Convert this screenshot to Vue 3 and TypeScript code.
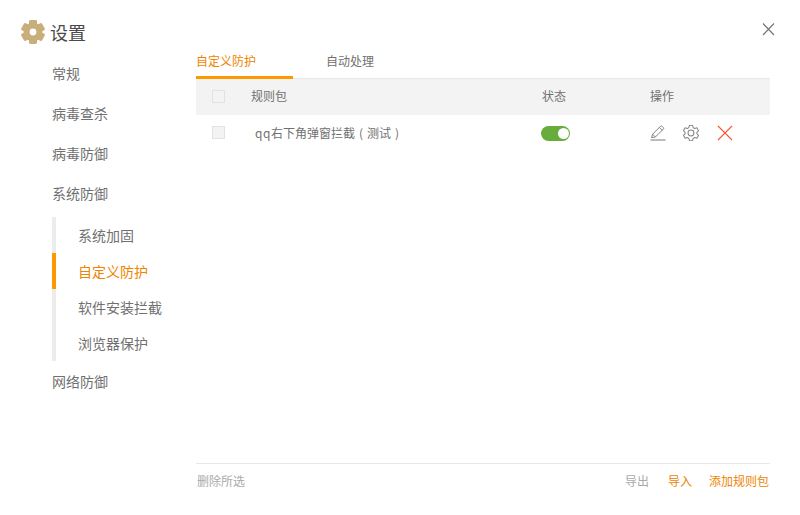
<script setup lang="ts">
const menuTop = ['常规', '病毒查杀', '病毒防御', '系统防御']
const subMenu = [
  { label: '系统加固', active: false },
  { label: '自定义防护', active: true },
  { label: '软件安装拦截', active: false },
  { label: '浏览器保护', active: false },
]
const teeth = [0, 60, 120, 180, 240, 300]
</script>

<template>
  <div class="app">
    <aside class="side">
      <div class="title">
        <svg class="logo" width="24" height="24" viewBox="0 0 24 24">
          <g fill="#c9ae7b">
            <rect v-for="t in teeth" :key="t" x="8" y="0" width="8" height="6" rx="1.4" :transform="`rotate(${t} 12 12)`" />
            <circle cx="12" cy="12" r="9.4" />
          </g>
          <circle cx="12" cy="12" r="3.4" fill="#fff" />
        </svg>
        <span>设置</span>
      </div>
      <ul class="menu">
        <li v-for="m in menuTop" :key="m" class="item">{{ m }}</li>
      </ul>
      <ul class="sub">
        <li v-for="s in subMenu" :key="s.label" class="sub-item" :class="{ on: s.active }">{{ s.label }}</li>
      </ul>
      <div class="item last">网络防御</div>
    </aside>

    <main class="main">
      <nav class="tabs">
        <span class="tab on">自定义防护</span>
        <span class="tab">自动处理</span>
      </nav>

      <div class="row head">
        <span class="box"></span>
        <span>规则包</span>
        <span>状态</span>
        <span>操作</span>
      </div>
      <div class="row body">
        <span class="box"></span>
        <span class="name"><span class="latin">qq</span>右下角弹窗拦截<span class="paren">(</span>测试<span class="paren">)</span></span>
        <span class="switch"><i></i></span>
        <span class="ops">
          <svg width="16" height="16" viewBox="0 0 16 16" fill="none" stroke="#858585" stroke-width="1">
            <path d="M1.5 12.6 2.6 9.2 10.6 1.2a1 1 0 0 1 1.4 0l1.4 1.4a1 1 0 0 1 0 1.4L5.4 12Z" />
            <path d="M2.6 9.2 5.4 12M9.4 2.5l2.8 2.8" />
            <path d="M0.5 15h15" stroke-width="1.1" />
          </svg>
          <svg width="16" height="16" viewBox="1 1 14 14" fill="none" stroke="#858585" stroke-width="0.9">
            <path d="M6.6.8h2.8l.5 2 1.3.75 2-.55 1.4 2.45-1.45 1.45v1.2L14.6 9.55 13.2 12l-2-.55-1.3.75-.5 2H6.6l-.5-2-1.3-.75-2 .55-1.4-2.45L2.85 8.1V6.9L1.4 5.45 2.8 3l2 .55 1.3-.75Z" transform="translate(0 .5)" stroke-linejoin="round" />
            <circle cx="8" cy="8" r="2.6" />
          </svg>
          <svg class="del" width="16" height="16" viewBox="0 0 16 16" fill="none" stroke="#f0583a" stroke-width="1.1">
            <path d="M1 1l14 14M15 1 1 15" />
          </svg>
        </span>
      </div>

      <footer class="foot">
        <span class="muted">删除所选</span>
        <span class="actions">
          <span class="muted export">导出</span>
          <span class="link">导入</span>
          <span class="link">添加规则包</span>
        </span>
      </footer>
    </main>

    <svg class="close" width="14" height="14" viewBox="0 0 14 14" fill="none" stroke="#777" stroke-width="1.2">
      <path d="M1 1.5l11 11.5M12 1.5 1 13" />
    </svg>
  </div>
</template>

<style scoped>
.app {
  position: relative;
  display: flex;
  width: 800px;
  height: 515px;
  overflow: hidden;
  background: #fff;
  color: #707070;
  font-family: "Noto Sans CJK SC", "Liberation Sans", sans-serif;
  font-size: 14px;
}
.side {
  width: 196px;
  flex: none;
  padding-top: 16px;
  box-sizing: border-box;
}
.title {
  display: flex;
  align-items: center;
  height: 32px;
  margin-bottom: 6px;
  padding-left: 21px;
  font-size: 18px;
  color: #4a4a4a;
}
.logo {
  margin-right: 5px;
}
.menu,
.sub {
  list-style: none;
  margin: 0;
  padding: 0;
}
.item {
  height: 40px;
  line-height: 38px;
  padding-left: 52px;
}
.sub {
  margin: 3px 0 1px 52px;
  border-left: 4px solid #ececec;
}
.sub-item {
  position: relative;
  height: 36px;
  line-height: 36px;
  padding-left: 22px;
}
.sub-item.on {
  color: #f08300;
}
.sub-item.on::before {
  content: "";
  position: absolute;
  left: -4px;
  top: 0;
  bottom: 0;
  width: 4px;
  background: #ff9900;
}
.main {
  flex: 1;
  min-width: 0;
  display: flex;
  flex-direction: column;
  padding-right: 30px;
  font-size: 12px;
}
.tabs {
  display: flex;
  height: 79px;
  box-sizing: border-box;
  align-items: flex-end;
  border-bottom: 1px solid #e8e8e8;
}
.tab {
  box-sizing: border-box;
  height: 34px;
  line-height: 34px;
  width: 130px;
}
.tab.on {
  width: 97px;
  margin-right: 33px;
  margin-bottom: -1px;
  height: 35px;
  color: #f08300;
  border-bottom: 3px solid #ff9900;
}
.row {
  display: grid;
  grid-template-columns: 39px 291px 108px 1fr;
  align-items: center;
  height: 36px;
  box-sizing: border-box;
  padding-left: 16px;
}
.head {
  background: #f3f3f3;
  padding-bottom: 4px;
}
.box {
  box-sizing: border-box;
  align-self: start;
  margin-top: 11px;
  width: 13px;
  height: 13px;
  border: 1px solid #e2e2e2;
  background: #f3f3f3;
}
.name {
  padding-left: 4px;
  padding-bottom: 2px;
}
.latin {
  letter-spacing: 0.6px;
}
.paren {
  display: inline-block;
  width: 12px;
  text-align: center;
}
.switch {
  position: relative;
  display: block;
  width: 29px;
  height: 15px;
  margin-left: -1px;
  border-radius: 8px;
  background: #67ad3b;
}
.switch i {
  position: absolute;
  right: 1px;
  top: 2px;
  width: 11px;
  height: 11px;
  border-radius: 50%;
  background: #fff;
}
.ops {
  display: flex;
  gap: 17px;
  align-items: center;
}
.ops .del {
  margin-left: 1px;
}
.foot {
  margin-top: auto;
  height: 52px;
  box-sizing: border-box;
  display: flex;
  justify-content: space-between;
  padding: 8px 1px 0;
  border-top: 1px solid #e8e8e8;
  line-height: 18px;
}
.actions {
  display: flex;
  gap: 17px;
}
.export {
  margin-right: 2px;
}
.muted {
  color: #aaa;
}
.link {
  color: #f08300;
}
.close {
  position: absolute;
  left: 762px;
  top: 22px;
}
</style>
